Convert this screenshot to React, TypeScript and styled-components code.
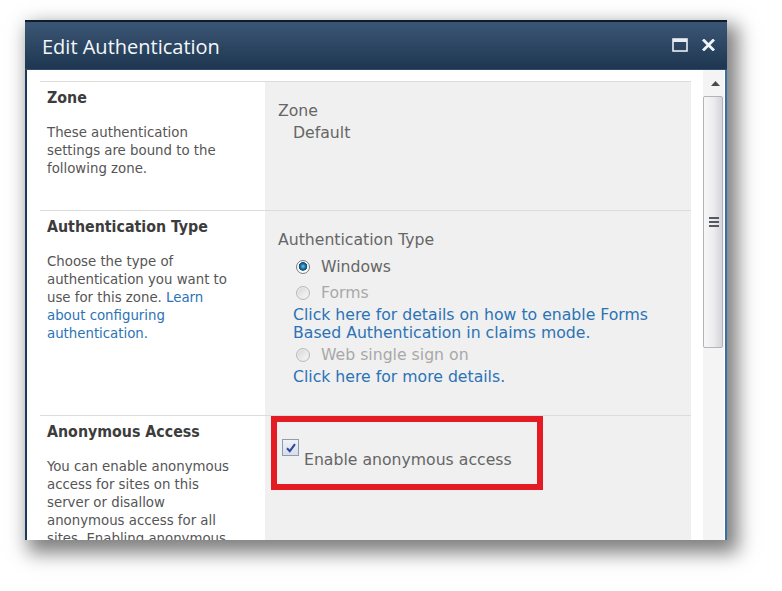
import React from "react";
import styled, { createGlobalStyle } from "styled-components";

const GlobalStyle = createGlobalStyle`
  html, body { margin: 0; padding: 0; background: #ffffff; }
  * { box-sizing: border-box; }
`;

const Page = styled.div`
  padding: 20px 0 0 25px;
  width: 782px;
  height: 591px;
  overflow: hidden;
`;

const Dialog = styled.div`
  width: 702px;
  height: 520px;
  display: flex;
  flex-direction: column;
  overflow: hidden;
  box-shadow: 7px 9px 18px 4px rgba(0, 0, 0, 0.5);
`;

const TitleBar = styled.div`
  height: 50px;
  flex: none;
  display: flex;
  align-items: center;
  justify-content: space-between;
  padding: 2px 12px 0 17px;
  background: linear-gradient(#3b5675, #1e3650);
  border-top: 2px solid #0e1c2d;
  border-bottom: 1px solid #2f4d6d;
`;

const Title = styled.h1`
  margin: 0;
  font-family: "Open Sans", "Noto Sans", sans-serif;
  font-weight: 400;
  font-size: 20px;
  color: #f4f7fa;
`;

const TitleButtons = styled.div`
  display: flex;
  align-items: center;
  gap: 14px;
  margin-top: -4px;
`;

const DialogBody = styled.div`
  flex: 1;
  display: flex;
  background: #ffffff;
  border-left: 2px solid #1c3a5b;
  border-right: 2px solid #3a6fa3;
  padding: 11px 1px 0 13px;
  min-height: 0;
`;

const Content = styled.div`
  width: 651px;
  flex: none;
  margin-right: 12px;
`;

const Section = styled.div<{ $minHeight?: number }>`
  display: grid;
  grid-template-columns: 225px 1fr;
  border-top: 1px solid #dcdcdc;
  min-height: ${(p) => (p.$minHeight ? `${p.$minHeight}px` : "auto")};
`;

const Description = styled.div`
  background: #ffffff;
  padding: 7px 28px 0 7px;
  font-family: "DejaVu Sans Condensed", "DejaVu Sans", sans-serif;
  font-size: 14.8px;
  line-height: 18px;
  color: #555555;
`;

const Heading = styled.h3`
  margin: 0 0 16px;
  font-size: 15.8px;
  font-weight: 700;
  line-height: 18px;
  color: #3c3c3c;
`;

const DescText = styled.p`
  margin: 0;
`;

const Link = styled.a`
  color: #2b73b6;
  text-decoration: none;
`;

const Control = styled.div<{ $pad?: string }>`
  background: #f0f0f0;
  padding: ${(p) => p.$pad ?? "20px 0 0 13px"};
  font-family: "DejaVu Sans", "Verdana", sans-serif;
  font-size: 15.7px;
  line-height: 18px;
  color: #666666;
`;

const FieldLabel = styled.div`
  line-height: 18px;
`;

const FieldValue = styled.div`
  margin-top: 4px;
  padding-left: 15px;
`;

const Options = styled.div`
  margin-top: 5px;
  padding-left: 15px;
  display: flex;
  flex-direction: column;
`;

const RadioRow = styled.label<{ $disabled?: boolean }>`
  display: flex;
  align-items: center;
  gap: 11px;
  height: 26px;
  padding-left: 3px;
  color: ${(p) => (p.$disabled ? "#a8a8a8" : "#666666")};
`;

const RadioDot = styled.span<{ $checked?: boolean }>`
  display: block;
  width: 14px;
  height: 14px;
  border-radius: 50%;
  flex: none;
  border: 1px solid ${(p) => (p.$checked ? "#7a7a7a" : "#b9b9b9")};
  background: ${(p) =>
    p.$checked
      ? "radial-gradient(circle at 50% 45%, #7cc0e6 0, #1c74aa 2.4px, #0f4c78 4px, #ffffff 4.6px, #eeeeee 100%)"
      : "linear-gradient(135deg, #d4d4d4, #fbfbfb)"};
  box-shadow: ${(p) => (p.$checked ? "none" : "inset 0 0 0 1px #ebebeb")};
`;

const LinkLine = styled(Link)`
  display: block;
  line-height: 18px;
`;

const RedFrame = styled.div`
  display: inline-flex;
  align-items: flex-end;
  width: 272px;
  margin-left: 6px;
  border: 6px solid #e41b23;
  padding: 17px 0 15px 5px;
  gap: 5px;
`;

const CheckBox = styled.span`
  width: 17px;
  height: 17px;
  flex: none;
  margin-bottom: 13px;
  border: 1px solid #8e9cb2;
  background: linear-gradient(#f0f2f7, #d8dde7);
  display: flex;
  align-items: center;
  justify-content: center;
`;

const CheckLabel = styled.span`
  line-height: 18px;
  white-space: nowrap;
  color: #666666;
`;

const Scrollbar = styled.div`
  width: 21px;
  flex: none;
  margin-top: -11px;
  display: flex;
  flex-direction: column;
  background: #f4f4f4;
`;

const ScrollUp = styled.div`
  height: 26px;
  display: flex;
  align-items: center;
  justify-content: center;
  padding-left: 3px;
`;

const Thumb = styled.div`
  height: 252px;
  margin: 0 1px 0 0;
  border: 1px solid #b3b3b8;
  border-radius: 2px;
  background: linear-gradient(90deg, #f7f7f8 0%, #ececef 55%, #d4d4d9 100%);
  display: flex;
  align-items: center;
  justify-content: center;
`;

const Grip = styled.div`
  display: flex;
  flex-direction: column;
  gap: 2px;
  margin-left: 1px;
  & > span {
    display: block;
    width: 10px;
    height: 2px;
    background: #555a60;
  }
`;

function MaximizeIcon() {
  return (
    <svg width="16" height="14" viewBox="0 0 16 14">
      <rect x="1" y="1" width="14" height="12" fill="none" stroke="#e9eef4" strokeWidth="1.6" />
      <rect x="1" y="1" width="14" height="3" fill="#e9eef4" />
    </svg>
  );
}

function CloseIcon() {
  return (
    <svg width="13" height="12" viewBox="0 0 13 12">
      <path d="M2 1.5 L11 10.5 M11 1.5 L2 10.5" stroke="#f2f5f8" strokeWidth="2.8" strokeLinecap="square" />
    </svg>
  );
}

function CheckMark() {
  return (
    <svg width="12" height="12" viewBox="0 0 12 12">
      <path d="M2 6.2 L4.8 9.2 L10 2.2" fill="none" stroke="#2a46a3" strokeWidth="2" />
    </svg>
  );
}

export default function App() {
  return (
    <>
      <GlobalStyle />
      <Page>
        <Dialog>
          <TitleBar>
            <Title>Edit Authentication</Title>
            <TitleButtons>
              <MaximizeIcon />
              <CloseIcon />
            </TitleButtons>
          </TitleBar>
          <DialogBody>
            <Content>
              <Section $minHeight={129}>
                <Description>
                  <Heading>Zone</Heading>
                  <DescText>These authentication settings are bound to the following zone.</DescText>
                </Description>
                <Control>
                  <FieldLabel>Zone</FieldLabel>
                  <FieldValue>Default</FieldValue>
                </Control>
              </Section>
              <Section $minHeight={205}>
                <Description>
                  <Heading>Authentication Type</Heading>
                  <DescText>
                    Choose the type of authentication you want to use for this zone.{" "}
                    <Link href="#">Learn about configuring authentication.</Link>
                  </DescText>
                </Description>
                <Control>
                  <FieldLabel>Authentication Type</FieldLabel>
                  <Options>
                    <RadioRow>
                      <RadioDot $checked />
                      Windows
                    </RadioRow>
                    <RadioRow $disabled>
                      <RadioDot />
                      Forms
                    </RadioRow>
                    <LinkLine href="#">
                      Click here for details on how to enable Forms
                      <br />
                      Based Authentication in claims mode.
                    </LinkLine>
                    <RadioRow $disabled>
                      <RadioDot />
                      Web single sign on
                    </RadioRow>
                    <LinkLine href="#">Click here for more details.</LinkLine>
                  </Options>
                </Control>
              </Section>
              <Section>
                <Description>
                  <Heading>Anonymous Access</Heading>
                  <DescText>
                    You can enable anonymous access for sites on this server or disallow anonymous access for all
                    sites. Enabling anonymous access allows site administrators to turn anonymous access on.
                  </DescText>
                </Description>
                <Control $pad="0">
                  <RedFrame>
                    <CheckBox>
                      <CheckMark />
                    </CheckBox>
                    <CheckLabel>Enable anonymous access</CheckLabel>
                  </RedFrame>
                </Control>
              </Section>
            </Content>
            <Scrollbar>
              <ScrollUp>
                <svg width="9" height="5" viewBox="0 0 9 5">
                  <path d="M0 5 L4.5 0 L9 5 Z" fill="#4a4a4a" />
                </svg>
              </ScrollUp>
              <Thumb>
                <Grip>
                  <span />
                  <span />
                  <span />
                </Grip>
              </Thumb>
            </Scrollbar>
          </DialogBody>
        </Dialog>
      </Page>
    </>
  );
}
